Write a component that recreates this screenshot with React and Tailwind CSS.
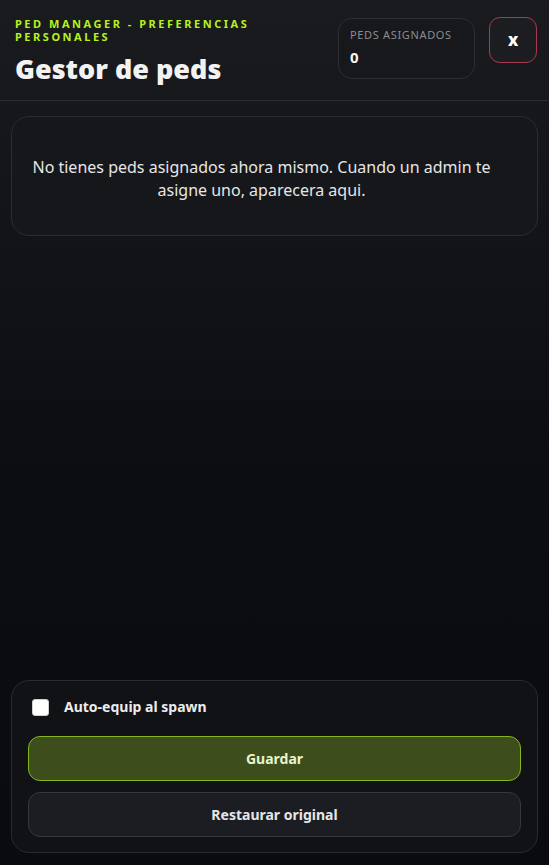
export default function App() {
  return (
    <div
      className="relative w-[549px] h-[865px] overflow-hidden flex flex-col bg-[#0a0b0f] text-white"
      style={{ fontFamily: '"Noto Sans", "Open Sans", sans-serif' }}
    >
      <div className="absolute inset-0 bg-gradient-to-b from-[#1a1b1e] via-[#0d0e12] to-[#0a0b0f] pointer-events-none" />

      <div className="relative flex flex-col flex-1">
        {/* header */}
        <div className="flex items-start justify-between pl-[15px] pr-[12px] pt-[17px] h-[101px] border-b border-[#2c2d31]">
          <div>
            <p className="text-[11px] leading-[13px] font-bold tracking-[0.23em] text-[#b6f21c] w-[275px]">
              PED MANAGER - PREFERENCIAS PERSONALES
            </p>
            <h1 className="mt-[10px] text-[27px] leading-[32px] font-black text-[#f2f2f2]">Gestor de peds</h1>
          </div>
          <div className="flex items-start gap-[14px]">
            <div className="mt-[1px] w-[137px] h-[61px] rounded-[14px] border border-[#2e2f34] bg-[#17181c] px-[11px] pt-[9px]">
              <p className="text-[11px] leading-[14px] tracking-[0.06em] text-[#8b8c91]">PEDS ASIGNADOS</p>
              <p className="mt-[6px] text-[15px] leading-[18px] font-bold text-[#f2f2f2]">0</p>
            </div>
            <button className="w-[48px] h-[46px] rounded-[11px] border border-[#a83a4e] bg-[#1c1d21] text-[17px] font-extrabold text-white flex items-center justify-center">
              x
            </button>
          </div>
        </div>

        {/* empty state */}
        <div className="mx-[11px] mt-[15px] h-[120px] rounded-[18px] border border-[#2b2c31] bg-[#16171b]/90 flex items-center justify-center pl-[8px] pr-[34px] pt-[5px]">
          <p className="text-center text-[16px] leading-[23px] text-[#e6e6e6]">
            No tienes peds asignados ahora mismo. Cuando un admin te asigne uno, aparecera aqui.
          </p>
        </div>

        <div className="flex-1" />

        {/* footer panel */}
        <div className="mx-[11px] mb-[12px] rounded-[18px] border border-[#2a2b30] bg-[#111216] px-[16px] pt-[16px] pb-[15px]">
          <label className="flex items-center gap-[15px] pl-[4px] h-[20px]">
            <span className="w-[17px] h-[17px] rounded-[3px] bg-white border border-[#cfcfcf]" />
            <span className="text-[14px] leading-[20px] font-bold text-[#ececec]">Auto-equip al spawn</span>
          </label>
          <button className="mt-[19px] w-full h-[45px] rounded-[12px] border border-[#84b61e] bg-[#3d4e1c] text-[14px] font-bold text-[#e9f5cc]">
            Guardar
          </button>
          <button className="mt-[11px] w-full h-[45px] rounded-[12px] border border-[#36373c] bg-[#1c1d22] text-[14px] font-bold text-[#e6e6e6]">
            Restaurar original
          </button>
        </div>
      </div>
    </div>
  );
}
